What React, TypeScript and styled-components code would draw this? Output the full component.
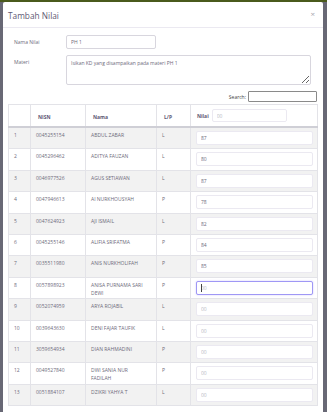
import React from 'react';
import styled, { createGlobalStyle } from 'styled-components';

const GlobalStyle = createGlobalStyle`
  html, body {
    margin: 0;
    padding: 0;
    background: #686875;
    overflow: hidden;
  }
  body {
    font-family: 'Open Sans', 'Liberation Sans', sans-serif;
    color: #6e6b7b;
  }
`;

const students = [
  { nisn: '0045255154', nama: 'ABDUL ZABAR', lp: 'L', nilai: '87' },
  { nisn: '0045296462', nama: 'ADITYA FAUZAN', lp: 'L', nilai: '80' },
  { nisn: '0046977526', nama: 'AGUS SETIAWAN', lp: 'L', nilai: '87' },
  { nisn: '0047946613', nama: 'AI NURKHOUSYAH', lp: 'P', nilai: '78' },
  { nisn: '0047624923', nama: 'AJI ISMAIL', lp: 'L', nilai: '82' },
  { nisn: '0045255146', nama: 'ALIFIA SRIFATMA', lp: 'P', nilai: '84' },
  { nisn: '0035511980', nama: 'ANIS NURKHOLIFAH', lp: 'P', nilai: '85' },
  { nisn: '0057898923', nama: 'ANISA PURNAMA SARI DEWI', lp: 'P', nilai: '', focused: true },
  { nisn: '0052074959', nama: 'ARYA ROJABIL', lp: 'L', nilai: '' },
  { nisn: '0039643630', nama: 'DENI FAJAR TAUFIK', lp: 'L', nilai: '' },
  { nisn: '3059654934', nama: 'DIAN RAHMADINI', lp: 'P', nilai: '' },
  { nisn: '0049527840', nama: 'DWI SANIA NUR FADILAH', lp: 'P', nilai: '' },
  { nisn: '0051884107', nama: 'DZIKRI YAHYA T', lp: 'L', nilai: '' },
];

const App = () => (
  <>
    <GlobalStyle />
    <TopBar />
    <Modal>
      <Header>
        <Title>Tambah Nilai</Title>
        <Close>×</Close>
      </Header>
      <Body>
        <FormRow>
          <Label>Nama Nilai</Label>
          <TextInput width="90px" defaultValue="PH 1" />
        </FormRow>
        <FormRow>
          <Label>Materi</Label>
          <TextArea placeholder="Isikan KD yang disampaikan pada materi PH 1" />
        </FormRow>
        <SearchRow>
          <span>Search:</span>
          <SearchInput />
        </SearchRow>
        <Table>
          <colgroup>
            <col style={{ width: 22 }} />
            <col style={{ width: 55 }} />
            <col style={{ width: 71 }} />
            <col style={{ width: 34 }} />
            <col />
          </colgroup>
          <thead>
            <tr>
              <Th />
              <Th>NISN</Th>
              <Th>Nama</Th>
              <Th>L/P</Th>
              <Th>
                <NilaiHead>
                  Nilai
                  <HeadInput placeholder="00" />
                </NilaiHead>
              </Th>
            </tr>
          </thead>
          <tbody>
            {students.map((s, i) => (
              <Row key={s.nisn} striped={i % 2 === 0}>
                <Td>{i + 1}</Td>
                <Td>{s.nisn}</Td>
                <Td>{s.nama}</Td>
                <Td>{s.lp}</Td>
                <InputCell>
                  <ScoreWrap>
                    <ScoreInput focused={!!s.focused} placeholder="00" defaultValue={s.nilai} />
                    {s.focused && <Caret />}
                  </ScoreWrap>
                </InputCell>
              </Row>
            ))}
          </tbody>
        </Table>
      </Body>
    </Modal>
  </>
);

const TopBar = styled.div`
  height: 2px;
  background: #4a5a1c;
`;

const Modal = styled.div`
  margin: 0 4px 0 3px;
  background: #fff;
  border-radius: 2px 2px 0 0;
  min-height: 420px;
`;

const Header = styled.div`
  height: 25px;
  display: flex;
  align-items: center;
  justify-content: space-between;
  padding: 0 8px 0 5px;
  border-bottom: 1px solid #ebe9f1;
`;

const Title = styled.div`
  font-size: 8.3px;
  font-weight: 500;
  color: #5e5873;
  margin-top: 1px;
`;

const Close = styled.div`
  font-size: 8px;
  color: #a8a8b0;
  margin-top: -2px;
`;

const Body = styled.div`
  padding: 7px 5px 0 5px;
`;

const FormRow = styled.div`
  display: flex;
  align-items: flex-start;
  padding-left: 6px;
  margin-bottom: 6px;
`;

const Label = styled.div`
  width: 52px;
  flex-shrink: 0;
  font-size: 5px;
  line-height: 8px;
  padding-top: 3px;
  color: #6e6b7b;
`;

const TextInput = styled.input<{ width: string }>`
  box-sizing: border-box;
  width: ${(p) => p.width};
  height: 14px;
  border: 1px solid #d8d6de;
  border-radius: 2px;
  padding: 0 4px;
  font-family: inherit;
  font-size: 5px;
  color: #6e6b7b;
  outline: none;
`;

const TextArea = styled.textarea`
  box-sizing: border-box;
  width: 245px;
  height: 30px;
  border: 1px solid #d8d6de;
  border-radius: 2px;
  padding: 3px 4px;
  font-family: inherit;
  font-size: 5px;
  line-height: 8px;
  color: #6e6b7b;
  resize: vertical;
  outline: none;
  &::placeholder {
    color: #6e6b7b;
  }
`;

const SearchRow = styled.div`
  display: flex;
  justify-content: flex-end;
  align-items: center;
  gap: 2px;
  font-size: 5px;
  color: #444;
  margin-top: 1px;
  padding-right: 1px;
`;

const SearchInput = styled.input`
  box-sizing: border-box;
  width: 69px;
  height: 11px;
  border: 1px solid #8a8a8a;
  border-radius: 1px;
  padding: 0;
  outline: none;
`;

const Table = styled.table`
  width: 310px;
  margin-top: 2px;
  border-collapse: collapse;
  table-layout: fixed;
  border: 1px solid #e3e3e8;
  font-size: 5px;
  line-height: 8px;
`;

const Th = styled.th`
  height: 16px;
  padding: 0 5px 5px 7px;
  text-align: left;
  vertical-align: bottom;
  font-weight: 700;
  color: #5e5873;
  border-left: 1px solid #e3e3e8;
  border-bottom: 2px solid #cfcfd6;
`;

const NilaiHead = styled.div`
  display: flex;
  align-items: center;
  gap: 3px;
  margin-left: -1px;
  margin-bottom: -1px;
`;

const HeadInput = styled.input`
  box-sizing: border-box;
  width: 75px;
  height: 13px;
  border: 1px solid #ebe9f1;
  border-radius: 2px;
  padding: 0 4px;
  font-family: inherit;
  font-size: 5px;
  outline: none;
  &::placeholder {
    color: #b9b9c3;
  }
`;

const Row = styled.tr<{ striped: boolean }>`
  background: ${(p) => (p.striped ? '#f2f2f2' : '#fff')};
`;

const Td = styled.td`
  padding: 3px 9px 1px 5px;
  vertical-align: top;
  color: #6e6b7b;
  border: 1px solid #e3e3e8;
`;

const InputCell = styled(Td)`
  padding: 3px 4px 3.4px 5px;
`;

const ScoreWrap = styled.div`
  position: relative;
`;

const ScoreInput = styled.input<{ focused: boolean }>`
  display: block;
  box-sizing: border-box;
  width: 100%;
  height: 14px;
  border: 1px solid ${(p) => (p.focused ? '#9f97f5' : '#ebe9f1')};
  box-shadow: ${(p) => (p.focused ? '0 0 2px rgba(115,103,240,0.35)' : 'none')};
  border-radius: 2px;
  background: #fff;
  padding: 0 4px;
  font-family: inherit;
  font-size: 5px;
  color: #6e6b7b;
  outline: none;
  &::placeholder {
    color: #b9b9c3;
  }
`;

const Caret = styled.span`
  position: absolute;
  left: 5px;
  top: 3px;
  width: 0.6px;
  height: 8px;
  background: #444;
`;

export default App;
